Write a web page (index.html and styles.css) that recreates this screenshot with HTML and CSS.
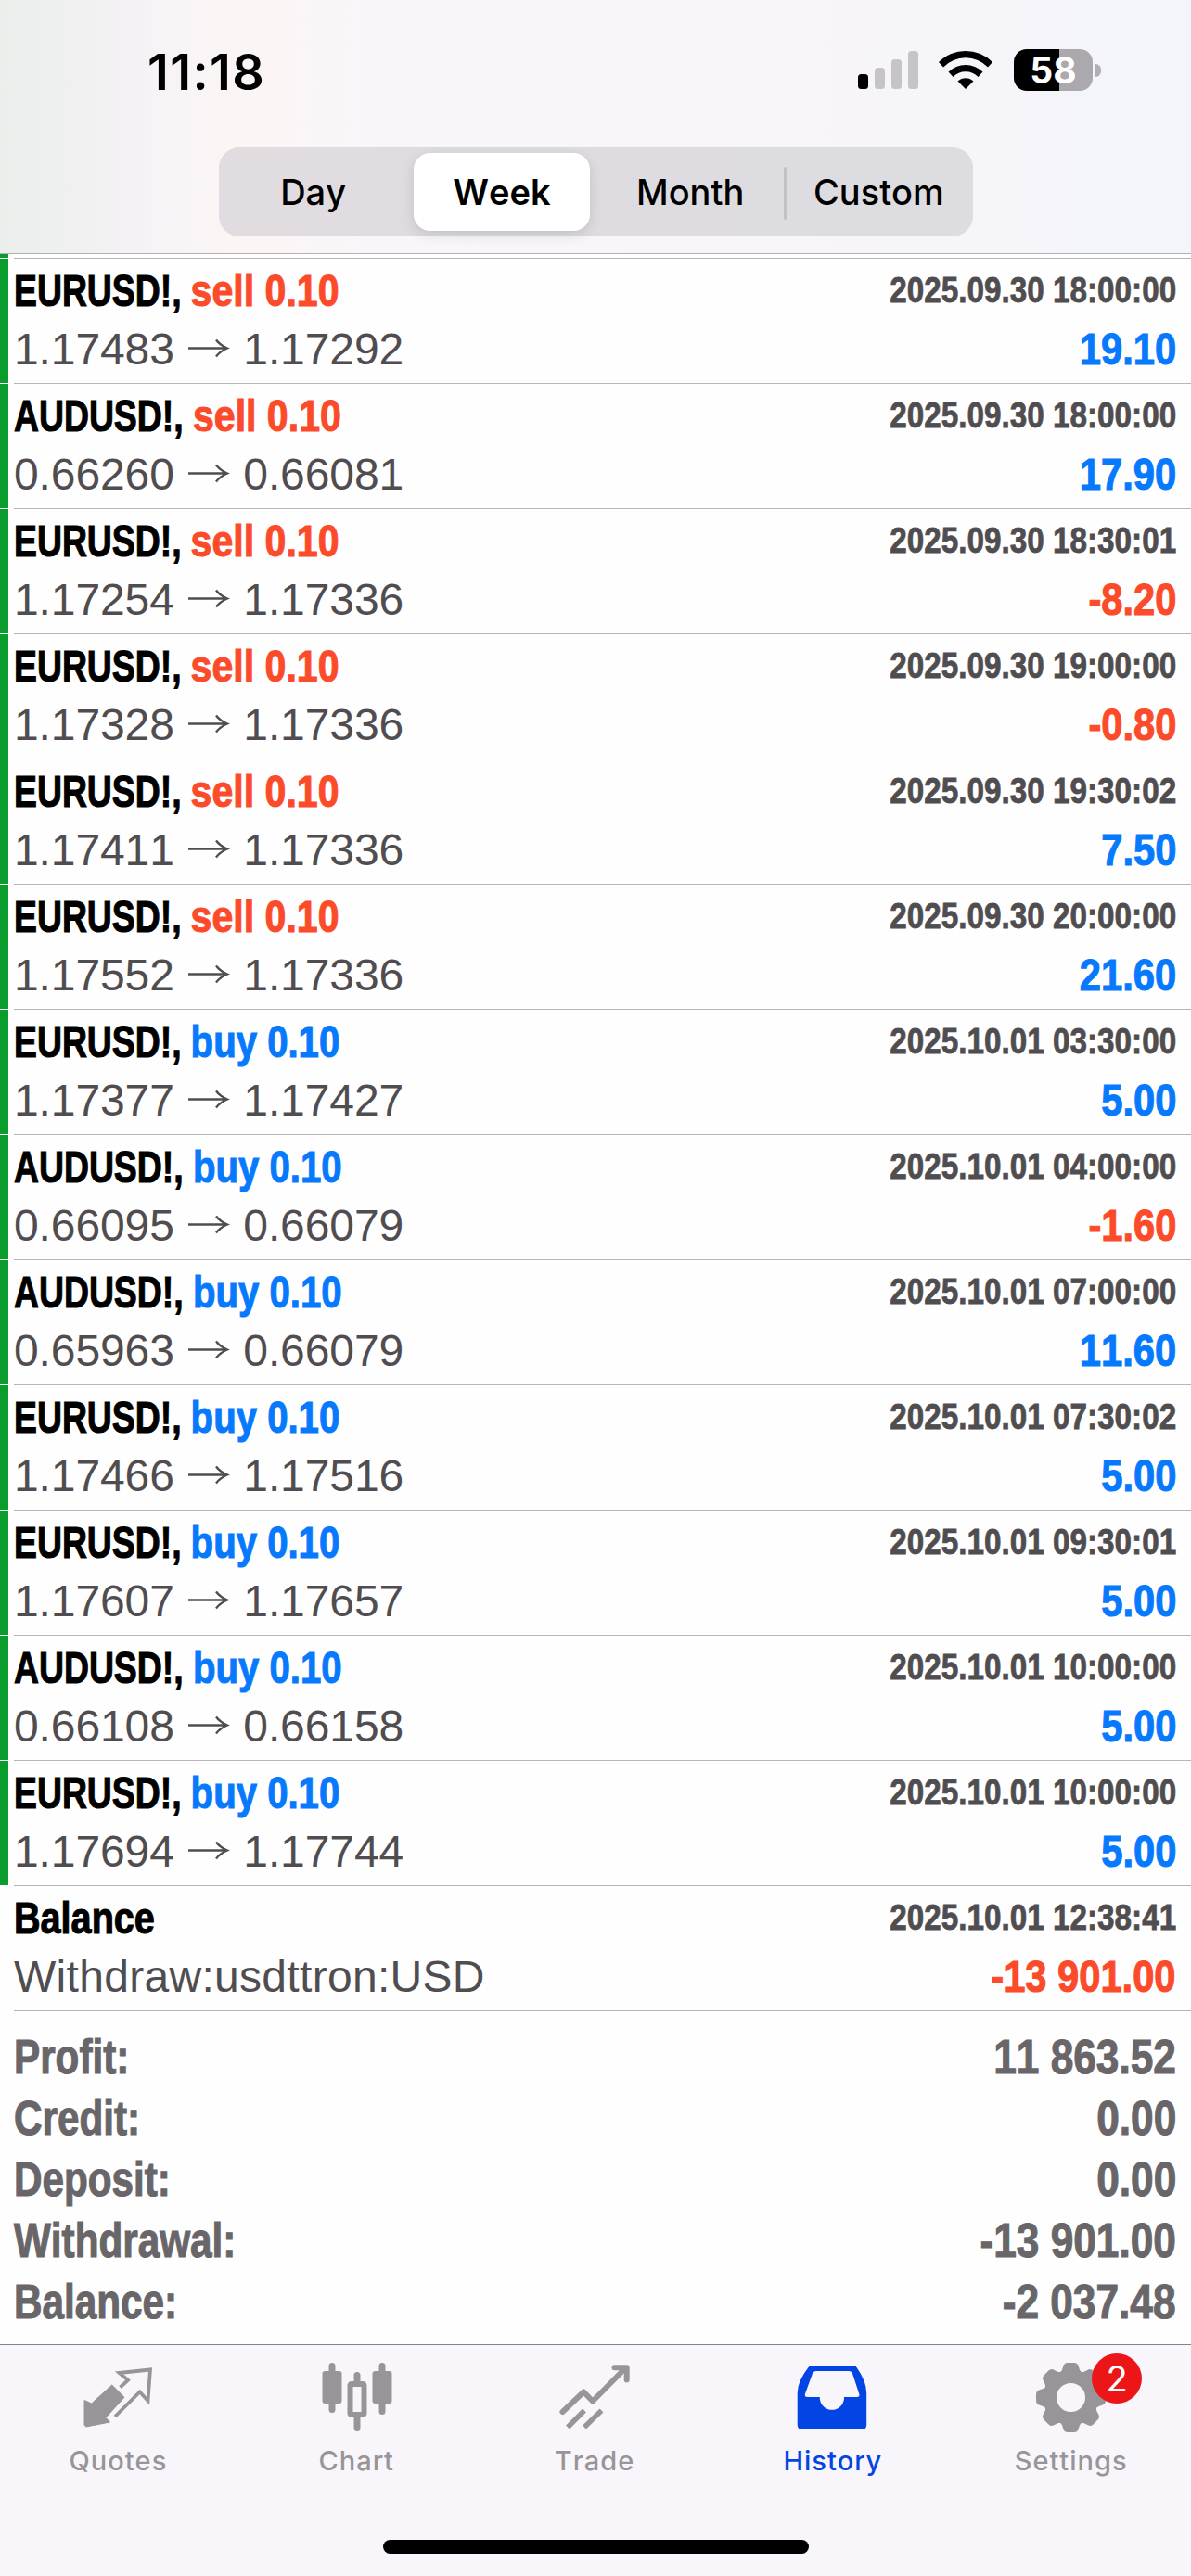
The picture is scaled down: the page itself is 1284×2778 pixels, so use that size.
FILE: index.html
```html
<!DOCTYPE html>
<html lang="en">
<head>
  <meta charset="UTF-8">
  <meta name="viewport" content="width=device-width, initial-scale=1.0">
  <title>History</title>
  <link rel="stylesheet" href="styles.css">
</head>
<body>
<svg width="0" height="0" class="defs">
  <symbol id="arrow" viewBox="0 0 48 36">
    <path d="M2 18.500H44M32 9.500Q36 15 44 18.500Q36 22 32 27.500" fill="none" stroke="currentColor" stroke-width="2.400"/>
  </symbol>
</svg>
<div class="container">
  <div class="header">
    <div class="status-bar">
      <div class="time">11:18</div>
      <div class="status-icons">
        <svg class="signal" width="65" height="41" viewBox="0 0 65 41">
          <rect x="0" y="25" width="11" height="16" rx="3.500" fill="#000"/>
          <rect x="18" y="18" width="11" height="23" rx="3.500" fill="#c6c4c8"/>
          <rect x="36" y="9" width="11" height="32" rx="3.500" fill="#c6c4c8"/>
          <rect x="54" y="0" width="11" height="41" rx="3.500" fill="#c6c4c8"/>
        </svg>
        <svg class="wifi" width="58" height="42" viewBox="0 0 58 42">
          <path d="M0 13A41 41 0 0 1 58 13L53 18.500A33.500 33.500 0 0 0 5 18.500Z"/>
          <path d="M10.500 23.500A26.500 26.500 0 0 1 47.500 23.500L42.500 29A19 19 0 0 0 15.500 29Z"/>
          <path d="M20.500 33.500A12.500 12.500 0 0 1 37.500 33.500L29 42Z"/>
        </svg>
        <div class="battery">58</div>
        <div class="battery-tip"></div>
      </div>
    </div>
    <div class="segments">
      <div class="segment">Day</div>
      <div class="segment active">Week</div>
      <div class="segment month">Month</div>
      <div class="segment">Custom</div>
    </div>
  </div>

  <div class="list-top"></div>
  <div class="deals">
    <div class="deal">
      <div class="line"><div class="symbol">EURUSD!, <span class="sell">sell 0.10</span></div><div class="date">2025.09.30 18:00:00</div></div>
      <div class="line"><div class="prices">1.17483 <svg><use href="#arrow"/></svg> 1.17292</div><div class="value plus">19.10</div></div>
    </div>
    <div class="deal">
      <div class="line"><div class="symbol">AUDUSD!, <span class="sell">sell 0.10</span></div><div class="date">2025.09.30 18:00:00</div></div>
      <div class="line"><div class="prices">0.66260 <svg><use href="#arrow"/></svg> 0.66081</div><div class="value plus">17.90</div></div>
    </div>
    <div class="deal">
      <div class="line"><div class="symbol">EURUSD!, <span class="sell">sell 0.10</span></div><div class="date">2025.09.30 18:30:01</div></div>
      <div class="line"><div class="prices">1.17254 <svg><use href="#arrow"/></svg> 1.17336</div><div class="value minus">-8.20</div></div>
    </div>
    <div class="deal">
      <div class="line"><div class="symbol">EURUSD!, <span class="sell">sell 0.10</span></div><div class="date">2025.09.30 19:00:00</div></div>
      <div class="line"><div class="prices">1.17328 <svg><use href="#arrow"/></svg> 1.17336</div><div class="value minus">-0.80</div></div>
    </div>
    <div class="deal">
      <div class="line"><div class="symbol">EURUSD!, <span class="sell">sell 0.10</span></div><div class="date">2025.09.30 19:30:02</div></div>
      <div class="line"><div class="prices">1.17411 <svg><use href="#arrow"/></svg> 1.17336</div><div class="value plus">7.50</div></div>
    </div>
    <div class="deal">
      <div class="line"><div class="symbol">EURUSD!, <span class="sell">sell 0.10</span></div><div class="date">2025.09.30 20:00:00</div></div>
      <div class="line"><div class="prices">1.17552 <svg><use href="#arrow"/></svg> 1.17336</div><div class="value plus">21.60</div></div>
    </div>
    <div class="deal">
      <div class="line"><div class="symbol">EURUSD!, <span class="buy">buy 0.10</span></div><div class="date">2025.10.01 03:30:00</div></div>
      <div class="line"><div class="prices">1.17377 <svg><use href="#arrow"/></svg> 1.17427</div><div class="value plus">5.00</div></div>
    </div>
    <div class="deal">
      <div class="line"><div class="symbol">AUDUSD!, <span class="buy">buy 0.10</span></div><div class="date">2025.10.01 04:00:00</div></div>
      <div class="line"><div class="prices">0.66095 <svg><use href="#arrow"/></svg> 0.66079</div><div class="value minus">-1.60</div></div>
    </div>
    <div class="deal">
      <div class="line"><div class="symbol">AUDUSD!, <span class="buy">buy 0.10</span></div><div class="date">2025.10.01 07:00:00</div></div>
      <div class="line"><div class="prices">0.65963 <svg><use href="#arrow"/></svg> 0.66079</div><div class="value plus">11.60</div></div>
    </div>
    <div class="deal">
      <div class="line"><div class="symbol">EURUSD!, <span class="buy">buy 0.10</span></div><div class="date">2025.10.01 07:30:02</div></div>
      <div class="line"><div class="prices">1.17466 <svg><use href="#arrow"/></svg> 1.17516</div><div class="value plus">5.00</div></div>
    </div>
    <div class="deal">
      <div class="line"><div class="symbol">EURUSD!, <span class="buy">buy 0.10</span></div><div class="date">2025.10.01 09:30:01</div></div>
      <div class="line"><div class="prices">1.17607 <svg><use href="#arrow"/></svg> 1.17657</div><div class="value plus">5.00</div></div>
    </div>
    <div class="deal">
      <div class="line"><div class="symbol">AUDUSD!, <span class="buy">buy 0.10</span></div><div class="date">2025.10.01 10:00:00</div></div>
      <div class="line"><div class="prices">0.66108 <svg><use href="#arrow"/></svg> 0.66158</div><div class="value plus">5.00</div></div>
    </div>
    <div class="deal">
      <div class="line"><div class="symbol">EURUSD!, <span class="buy">buy 0.10</span></div><div class="date">2025.10.01 10:00:00</div></div>
      <div class="line"><div class="prices">1.17694 <svg><use href="#arrow"/></svg> 1.17744</div><div class="value plus">5.00</div></div>
    </div>
    <div class="deal balance">
      <div class="line"><div class="symbol">Balance</div><div class="date">2025.10.01 12:38:41</div></div>
      <div class="line"><div class="prices">Withdraw:usdttron:USD</div><div class="value minus">-13 901.00</div></div>
    </div>
  </div>

  <div class="summary">
    <div class="total"><span class="label">Profit:</span><span class="amount">11 863.52</span></div>
    <div class="total"><span class="label">Credit:</span><span class="amount">0.00</span></div>
    <div class="total"><span class="label">Deposit:</span><span class="amount">0.00</span></div>
    <div class="total"><span class="label">Withdrawal:</span><span class="amount">-13 901.00</span></div>
    <div class="total"><span class="label">Balance:</span><span class="amount">-2 037.48</span></div>
  </div>

  <div class="tabbar">
    <div class="tabs">
      <div class="tab">
        <svg viewBox="0 0 75 75">
          <path d="M29.700 24L43 37.300L23 59.300L27.500 64L1.700 69L0 67V40.500L7.700 44Z" fill="currentColor" stroke="currentColor" stroke-linejoin="round"/>
          <path d="M38.500 26.500L47 18.800L37.500 11L71 7.500L68.500 41L59.700 31.500L33 58" fill="none" stroke="currentColor" stroke-width="3.800"/>
        </svg>
        <span>Quotes</span>
      </div>
      <div class="tab">
        <svg viewBox="0 0 75 75" fill="currentColor">
          <rect x="6.500" y="0" width="7" height="54" rx="3.500"/>
          <rect x="-.5" y="9" width="21" height="35" rx="3"/>
          <rect x="33.500" y="10" width="7" height="14" rx="3.500"/>
          <rect x="33.500" y="56" width="7" height="18" rx="3.500"/>
          <rect x="29.500" y="23" width="15" height="33" rx="1.500" fill="none" stroke="currentColor" stroke-width="6"/>
          <rect x="60.500" y="0" width="7" height="56" rx="3.500"/>
          <rect x="53.500" y="9" width="21" height="35" rx="3"/>
        </svg>
        <span>Chart</span>
      </div>
      <div class="tab">
        <svg viewBox="0 0 75 75" fill="none" stroke="currentColor" stroke-width="6" stroke-linecap="round" stroke-linejoin="round">
          <path d="M2.500 53L25.200 31.500L35 41.500L70 6"/>
          <path d="M58.500 5.200H71.700V18.500"/>
          <path d="M8 69.500L26 51.500M26 69.500L44.500 51.500" stroke-width="5.500" stroke-linecap="butt"/>
        </svg>
        <span>Trade</span>
      </div>
      <div class="tab active">
        <svg viewBox="0 0 75 75" fill="currentColor" fill-rule="evenodd">
          <path d="M14.500 3H59Q61.500 3 62.500 5Q73.200 20 73.200 33V67Q73.200 72 68.200 72H3.700Q-1.300 72 -1.300 67V33Q-1.300 20 10.500 5Q11.500 3 14.500 3ZM18.500 9Q16 9 15 11.500L7 33.500Q6 37 9.500 37H22.800V39A13.200 13.500 0 0 0 49 39V37H62.500Q66.500 37 65.200 33.500L58 11.500Q57 9 54.500 9Z"/>
        </svg>
        <span>History</span>
      </div>
      <div class="tab">
        <svg viewBox="0 0 75 75">
          <defs><path id="tooth" d="M-13 -26Q-9.500 -28 -8.500 -33Q-7.500 -37.500 -3.500 -37.500H3.500Q7.500 -37.500 8.500 -33Q9.500 -28 13 -26Z" fill="currentColor"/></defs>
          <g transform="translate(36.500 37.500)">
            <circle r="22.500" fill="none" stroke="currentColor" stroke-width="14"/>
            <use href="#tooth"/>
            <use href="#tooth" transform="rotate(45)"/>
            <use href="#tooth" transform="rotate(90)"/>
            <use href="#tooth" transform="rotate(135)"/>
            <use href="#tooth" transform="rotate(180)"/>
            <use href="#tooth" transform="rotate(225)"/>
            <use href="#tooth" transform="rotate(270)"/>
            <use href="#tooth" transform="rotate(315)"/>
          </g>
        </svg>
        <span>Settings</span>
        <div class="badge">2</div>
      </div>
    </div>
    <div class="home-indicator"></div>
  </div>
</div>
</body>
</html>
```
FILE: styles.css
```css
body {
  margin: 0;
  font-family: "Liberation Sans", Arial, sans-serif;
  font-kerning: none;
  background-color: #fefefe;
}

* {
  box-sizing: border-box;
}

.defs {
  display: block;
}

.container {
  width: 1284px;
  height: 2778px;
  overflow: hidden;
  display: flex;
  flex-direction: column;
}

.header {
  height: 274px;
  border-bottom: 1px solid #b4b1b5;
  background: linear-gradient(90deg, #ebefec 0, #f0f0f1 90px, #f7f3f6 170px, #fbf5f5 250px, #fbf5f6 300px, #f9f6f9 400px, #f7f5f9 900px, #f3f5fb 1284px);
}

.status-bar {
  height: 159px;
  padding: 53px 97px 0 159px;
  display: flex;
  justify-content: space-between;
}

.time {
  font-family: Inter, sans-serif;
  font-weight: 600;
  font-size: 54px;
  line-height: 49px;
  letter-spacing: 1.4px;
}

.status-icons {
  display: flex;
  height: 45px;
}

.signal {
  margin-top: 2px;
}

.wifi {
  margin: 1px 23px 0 22px;
}

.battery {
  width: 85px;
  height: 45px;
  border-radius: 14px;
  background: linear-gradient(90deg, #000 49px, #aba9ad 49px);
  color: #fff;
  font-family: Inter, sans-serif;
  font-weight: 700;
  font-size: 39px;
  line-height: 46px;
  text-align: center;
}

.battery-tip {
  width: 6px;
  height: 14px;
  margin: 16px 0 0 3px;
  border-radius: 0 6px 6px 0;
  background-color: #b1afb3;
}

.segments {
  width: 813px;
  height: 96px;
  margin-left: 236px;
  display: flex;
  border-radius: 22px;
  background: linear-gradient(90deg, #e1dce0, #dedce1 40%, #dddce1);
}

.segment {
  flex: 1;
  margin: 6px 7px;
  font-family: Inter, sans-serif;
  font-size: 38px;
  line-height: 85px;
  text-align: center;
  font-weight: 450;
  position: relative;
}

.segment.active {
  background-color: #fff;
  border-radius: 18px;
  font-weight: 600;
  box-shadow: 0 4px 14px rgba(0, 0, 0, 0.12);
}

.month::after {
  content: "";
  position: absolute;
  right: -9px;
  top: 15px;
  width: 3px;
  height: 57px;
  border-radius: 2px;
  background-color: #c2c0c5;
}

.list-top {
  width: 9px;
  height: 4px;
  background-color: #0a9d2e;
}

.deal {
  height: 135px;
  margin-left: 15px;
  padding: 3px 16px 0 0;
  border-top: 1px solid #b6b5b8;
  position: relative;
}

.deal::before {
  content: "";
  position: absolute;
  left: -15px;
  top: 0;
  width: 9px;
  height: 134px;
  background-color: #0a9d2e;
}

.balance::before {
  display: none;
}

.line {
  display: flex;
  justify-content: space-between;
  height: 63px;
  line-height: 63px;
  white-space: nowrap;
}

/* condensed bold */
.symbol,
.date,
.value,
.label,
.amount {
  font-weight: bold;
  -webkit-text-stroke: 1.1px currentColor;
}

.symbol,
.label {
  transform-origin: left;
}

.date,
.value,
.amount {
  transform: scaleX(0.853);
  transform-origin: right;
}

.symbol {
  font-size: 48px;
  transform: scaleX(0.778);
}

.balance .symbol {
  transform: scaleX(0.825);
}

.symbol span {
  display: inline-block;
  transform: scaleX(1.1);
  transform-origin: left;
}

.symbol .buy {
  transform: scaleX(1.075);
}

.sell,
.minus {
  color: #fb4b2b;
}

.buy,
.plus {
  color: #0679fc;
}

.date {
  font-size: 39px;
  line-height: 61px;
  color: #504d50;
  -webkit-text-stroke-width: 0.8px;
}

.prices {
  font-size: 48px;
  letter-spacing: -0.1px;
  color: #504d50;
}

.balance .prices {
  letter-spacing: 0.3px;
}

.prices svg {
  width: 48px;
  height: 36px;
  vertical-align: baseline;
}

.value {
  font-size: 48px;
  transform: scaleX(0.868);
}

.summary {
  height: 360px;
  margin-left: 15px;
  padding: 17px 16px 0 0;
  border-top: 1px solid #b6b5b8;
}

.total {
  display: flex;
  justify-content: space-between;
  font-size: 51px;
  line-height: 66px;
  color: #686669;
}

.label {
  transform: scaleX(0.828);
}

.amount {
  transform: scaleX(0.867);
}

.tabbar {
  height: 250px;
  border-top: 1px solid #858388;
  background-color: #f8f6fa;
}

.tabs {
  display: flex;
  height: 210px;
}

.tab {
  flex: 1;
  display: flex;
  flex-direction: column;
  align-items: center;
  padding-top: 19px;
  position: relative;
  color: #979599;
  font-family: Inter, sans-serif;
  font-size: 29px;
  font-weight: 500;
  letter-spacing: 1px;
}

.tab svg {
  width: 75px;
  height: 75px;
  overflow: visible;
}

.tab span {
  margin-top: 11px;
  margin-right: 2px;
  line-height: 40px;
}

.tab.active {
  color: #0244e4;
}

.badge {
  position: absolute;
  left: 150px;
  top: 9px;
  width: 54px;
  height: 54px;
  border-radius: 50%;
  background-color: #ec1618;
  color: #fff;
  font-size: 38px;
  font-weight: 400;
  line-height: 54px;
  letter-spacing: 0;
  text-align: center;
}

.home-indicator {
  width: 459px;
  height: 15px;
  margin: 0 auto;
  border-radius: 8px;
  background-color: #000;
}
```
